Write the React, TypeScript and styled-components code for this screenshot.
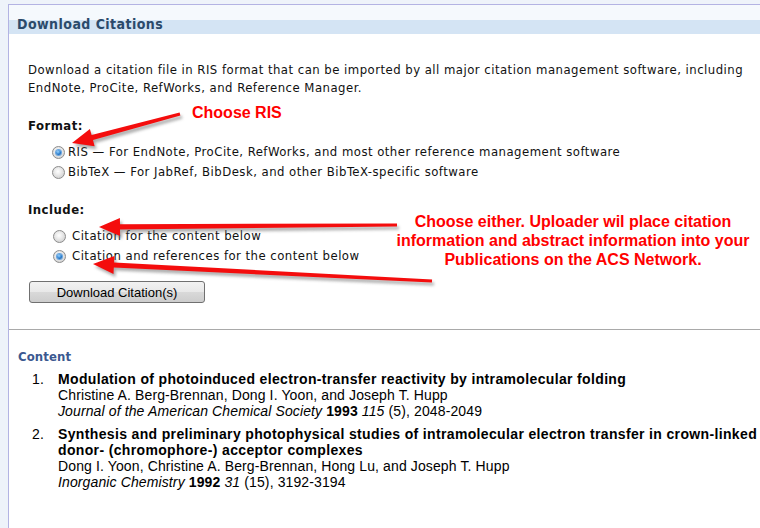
import React from 'react';
import styled, { createGlobalStyle, css } from 'styled-components';

const GlobalStyle = createGlobalStyle`
  html, body {
    margin: 0;
    padding: 0;
    background: #eef3fa;
  }
`;

const uiFont = `"DejaVu Sans Condensed", "DejaVu Sans", sans-serif`;
const listFont = `"Liberation Sans", Arial, sans-serif`;

const Root = styled.div`
  position: relative;
  width: 760px;
  height: 528px;
  overflow: hidden;
  padding-top: 4px;
  box-sizing: border-box;
`;

const Panel = styled.div`
  margin-left: 8px;
  border-left: 1px solid #b3b3e3;
  border-top: 1px solid #b3b3e3;
  background: #ffffff;
  height: 524px;
  font-family: ${uiFont};
  color: #111;
`;

const Header = styled.div`
  height: 29px;
  background: linear-gradient(to bottom, #f5f9fd 0, #f5f9fd 15px, #d4e4f4 15px, #d4e4f4 100%);
  padding-left: 8px;
  display: flex;
  align-items: flex-end;
`;

const HeaderTitle = styled.h2`
  margin: 0 0 1px;
  font-size: 14px;
  font-weight: bold;
  letter-spacing: 0.45px;
  color: #2b4a6b;
  line-height: 18px;
`;

const Form = styled.div`
  padding: 27px 19px 26px;
  border-bottom: 1px solid #a9a9a9;
  font-size: 13px;
  letter-spacing: 0.47px;
`;

const Intro = styled.p`
  margin: 0;
  line-height: 18px;
  white-space: nowrap;
`;

const Label = styled.div`
  margin-top: ${({ $top }: { $top: number }) => $top}px;
  font-weight: bold;
  line-height: 18px;
`;

const Options = styled.div`
  margin-top: 7px;
  display: flex;
  flex-direction: column;
`;

const Option = styled.label<{ $inset: number; $gap: number }>`
  display: flex;
  align-items: center;
  height: 20px;
  padding-left: ${({ $inset }) => $inset}px;
  gap: ${({ $gap }) => $gap}px;
  line-height: 20px;
`;

const Radio = styled.span<{ $checked?: boolean }>`
  width: 13px;
  height: 13px;
  flex: none;
  box-sizing: border-box;
  border-radius: 50%;
  border: 1px solid #8c8c8c;
  background: radial-gradient(circle at 45% 40%, #ffffff 0, #ececec 35%, #c6c6c6 100%);
  display: inline-flex;
  align-items: center;
  justify-content: center;
  ${({ $checked }) =>
    $checked &&
    css`
      &::after {
        content: '';
        width: 5px;
        height: 5px;
        border-radius: 50%;
        background: radial-gradient(circle at 40% 35%, #9ad4ff 0, #2a7fd0 55%, #0b3f80 100%);
        box-shadow: 0 0 0 1px #6aa6e0;
      }
    `}
`;

const Button = styled.button`
  margin-top: 15px;
  margin-left: 1px;
  width: 176px;
  height: 22px;
  padding: 0;
  border: 1px solid #707070;
  border-radius: 3px;
  background: linear-gradient(to bottom, #f2f2f2 0, #e8e8e8 50%, #d9d9d9 51%, #cdcdcd 100%);
  font-family: ${listFont};
  font-size: 13px;
  color: #000;
`;

const ContentSection = styled.div`
  padding: 19px 0 0 9px;
  font-family: ${listFont};
  font-size: 14px;
  letter-spacing: 0.12px;
`;

const ContentTitle = styled.h3`
  margin: 0;
  font-family: ${uiFont};
  font-size: 13px;
  letter-spacing: 0.1px;
  line-height: 16px;
  color: #3b5890;
`;

const Items = styled.ol`
  margin: 6px 0 0;
  padding: 0;
  list-style: none;
  display: flex;
  flex-direction: column;
  gap: 7px;
`;

const Item = styled.li`
  display: grid;
  grid-template-columns: 26px 1fr;
  column-gap: 14px;
  line-height: 16px;
  color: #000;
`;

const Num = styled.span`
  text-align: right;
`;

const ItemTitle = styled.div`
  font-weight: bold;
  letter-spacing: 0.35px;
`;

const Journal = styled.div`
  i {
    font-style: italic;
  }
`;

const Overlay = styled.svg`
  position: absolute;
  left: 0;
  top: 0;
  pointer-events: none;
`;

const Note = styled.div<{ $x: number; $y: number; $w?: number }>`
  position: absolute;
  left: ${({ $x }) => $x}px;
  top: ${({ $y }) => $y}px;
  width: ${({ $w }) => ($w ? `${$w}px` : 'auto')};
  font-family: ${listFont};
  font-weight: bold;
  font-size: 16px;
  line-height: 19px;
  color: #ff0000;
  text-align: center;
  white-space: nowrap;
`;

function arrowPoints(x1: number, y1: number, x2: number, y2: number) {
  const dx = x2 - x1;
  const dy = y2 - y1;
  const len = Math.hypot(dx, dy);
  const ux = dx / len;
  const uy = dy / len;
  const nx = -uy;
  const ny = ux;
  const headL = 21;
  const headW = 9;
  const tailW = 1.6;
  const shaftW = 2.6;
  const bx = x2 - ux * headL;
  const by = y2 - uy * headL;
  const pts = [
    [x1 + nx * tailW, y1 + ny * tailW],
    [bx + nx * shaftW, by + ny * shaftW],
    [bx + nx * headW, by + ny * headW],
    [x2, y2],
    [bx - nx * headW, by - ny * headW],
    [bx - nx * shaftW, by - ny * shaftW],
    [x1 - nx * tailW, y1 - ny * tailW],
  ];
  return pts.map((p) => `${p[0].toFixed(1)},${p[1].toFixed(1)}`).join(' ');
}

const ARROWS = [
  { x1: 180, y1: 114, x2: 72, y2: 143 },
  { x1: 397, y1: 225, x2: 99, y2: 227 },
  { x1: 432, y1: 281, x2: 93, y2: 264 },
];

function Arrows() {
  return (
    <Overlay width={760} height={528}>
      <defs>
        <filter id="shade" x="-10%" y="-50%" width="120%" height="200%">
          <feGaussianBlur stdDeviation="1.6" />
        </filter>
      </defs>
      {ARROWS.map((a, i) => (
        <g key={i}>
          <polygon
            points={arrowPoints(a.x1 + 2, a.y1 + 3, a.x2 + 2, a.y2 + 3)}
            fill="#6b6b6b"
            opacity={0.55}
            filter="url(#shade)"
          />
          <polygon points={arrowPoints(a.x1, a.y1, a.x2, a.y2)} fill="#f40d0d" />
        </g>
      ))}
    </Overlay>
  );
}

export default function App() {
  return (
    <Root>
      <GlobalStyle />
      <Panel>
        <Header>
          <HeaderTitle>Download Citations</HeaderTitle>
        </Header>
        <Form>
          <Intro>
            Download a citation file in RIS format that can be imported by all major citation management software, including
            <br />
            EndNote, ProCite, RefWorks, and Reference Manager.
          </Intro>
          <Label $top={20}>Format:</Label>
          <Options>
            <Option $inset={24} $gap={3}>
              <Radio $checked />
              RIS — For EndNote, ProCite, RefWorks, and most other reference management software
            </Option>
            <Option $inset={24} $gap={3}>
              <Radio />
              BibTeX — For JabRef, BibDesk, and other BibTeX-specific software
            </Option>
          </Options>
          <Label $top={19}>Include:</Label>
          <Options>
            <Option $inset={25} $gap={6}>
              <Radio />
              Citation for the content below
            </Option>
            <Option $inset={25} $gap={6}>
              <Radio $checked />
              Citation and references for the content below
            </Option>
          </Options>
          <Button>Download Citation(s)</Button>
        </Form>
        <ContentSection>
          <ContentTitle>Content</ContentTitle>
          <Items>
            <Item>
              <Num>1.</Num>
              <div>
                <ItemTitle>Modulation of photoinduced electron-transfer reactivity by intramolecular folding</ItemTitle>
                <div>Christine A. Berg-Brennan, Dong I. Yoon, and Joseph T. Hupp</div>
                <Journal>
                  <i>Journal of the American Chemical Society</i> <b>1993</b> <i>115</i> (5), 2048-2049
                </Journal>
              </div>
            </Item>
            <Item>
              <Num>2.</Num>
              <div>
                <ItemTitle>
                  Synthesis and preliminary photophysical studies of intramolecular electron transfer in crown-linked
                  <br />
                  donor- (chromophore-) acceptor complexes
                </ItemTitle>
                <div>Dong I. Yoon, Christine A. Berg-Brennan, Hong Lu, and Joseph T. Hupp</div>
                <Journal>
                  <i>Inorganic Chemistry</i> <b>1992</b> <i>31</i> (15), 3192-3194
                </Journal>
              </div>
            </Item>
          </Items>
        </ContentSection>
      </Panel>
      <Arrows />
      <Note $x={192} $y={103}>Choose RIS</Note>
      <Note $x={393} $y={212} $w={360}>
        Choose either. Uploader wil place citation
        <br />
        information and abstract information into your
        <br />
        Publications on the ACS Network.
      </Note>
    </Root>
  );
}
